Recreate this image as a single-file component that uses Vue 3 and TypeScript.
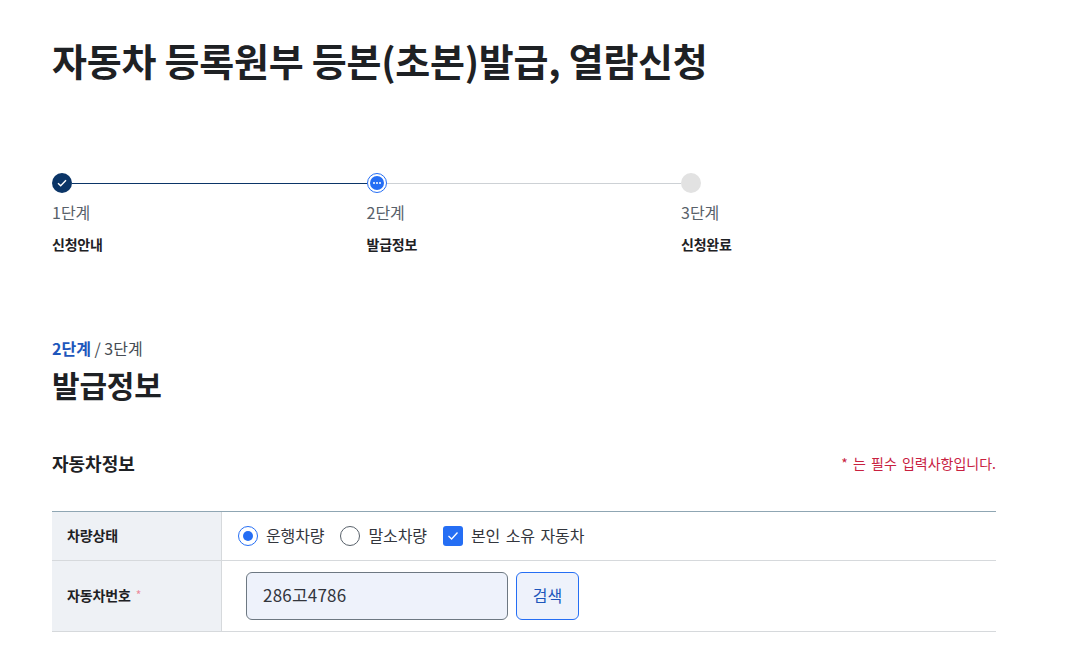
<script setup lang="ts">
interface Step { no: string; name: string; state: 'done' | 'current' | 'todo' }
const steps: Step[] = [
  { no: '1단계', name: '신청안내', state: 'done' },
  { no: '2단계', name: '발급정보', state: 'current' },
  { no: '3단계', name: '신청완료', state: 'todo' },
]
</script>

<template>
  <main class="page">
    <h1 class="title">자동차 등록원부 등본(초본)발급, 열람신청</h1>

    <ol class="steps">
      <li v-for="s in steps" :key="s.no" class="step" :class="s.state">
        <div class="track">
          <span class="dot">
            <svg v-if="s.state === 'done'" width="10" height="8" viewBox="0 0 10 8" fill="none">
              <path d="M1 4.2 3.7 6.8 9 1.2" stroke="#fff" stroke-width="1.4" />
            </svg>
            <span v-else-if="s.state === 'current'" class="inner">
              <i></i><i></i><i></i>
            </span>
          </span>
          <span v-if="s.state !== 'todo'" class="line"></span>
        </div>
        <div class="no">{{ s.no }}</div>
        <div class="name">{{ s.name }}</div>
      </li>
    </ol>

    <div class="count"><b>2단계</b> / 3단계</div>
    <h2 class="sub">발급정보</h2>

    <div class="sec-head">
      <h3 class="sec">자동차정보</h3>
      <p class="req">* 는 필수 입력사항입니다.</p>
    </div>

    <div class="table">
      <div class="row r1">
        <div class="th">차량상태</div>
        <div class="td opts">
          <label class="opt"><span class="radio on"></span><span class="lbl">운행차량</span></label>
          <label class="opt"><span class="radio"></span><span class="lbl">말소차량</span></label>
          <label class="opt"><span class="check">
            <svg width="12" height="10" viewBox="0 0 12 10" fill="none">
              <path d="M1.5 5 4.6 8 10.5 1.5" stroke="#fff" stroke-width="1.3" />
            </svg>
          </span><span class="lbl">본인 소유 자동차</span></label>
        </div>
      </div>
      <div class="row r2">
        <div class="th">자동차번호<span class="star">*</span></div>
        <div class="td field">
          <input class="input" value="286고4786" />
          <button class="btn" type="button">검색</button>
        </div>
      </div>
    </div>
  </main>
</template>

<style>
html, body { margin: 0; background: #fff; }
</style>

<style scoped>
.page {
  width: 944px;
  padding: 36px 0 0 52px;
  font-family: "Noto Sans CJK KR", "Noto Sans", sans-serif;
  color: #1e2124;
  height: 624px;
  overflow: hidden;
}
.title { margin: 0; font-size: 38px; line-height: 48px; font-weight: 700; letter-spacing: -0.25px; }
.steps { list-style: none; margin: 0; padding: 0; display: flex; margin-top: 89px; }
.step { width: 314.5px; }
.track { display: flex; align-items: center; height: 20px; }
.dot { width: 20px; height: 20px; border-radius: 50%; flex: none; display: flex; align-items: center; justify-content: center; box-sizing: border-box; }
.done .dot { background: #0b3567; }
.current .dot { background: #fff; border: 1px solid #256ef4; }
.todo .dot { background: #e2e2e2; }
.inner { width: 14px; height: 14px; border-radius: 50%; background: #256ef4; display: flex; align-items: center; justify-content: center; gap: 1px; }
.inner i { width: 2px; height: 2px; border-radius: 50%; background: #fff; }
.line { flex: 1; height: 1px; background: #cdd1d5; }
.done .line { background: #0b3567; }
.no { margin-top: 7px; font-size: 16px; line-height: 24px; color: #58616a; }
.name { margin-top: 10px; font-size: 14px; line-height: 20px; font-weight: 700; color: #1e2124; letter-spacing: -0.2px; }
.count { margin-top: 82px; font-size: 16px; line-height: 24px; color: #464c53; }
.count b { color: #1d56bc; font-weight: 700; }
.sub { margin: 5px 0 0; font-size: 30px; line-height: 38px; font-weight: 700; letter-spacing: -0.2px; }
.sec-head { display: flex; justify-content: space-between; align-items: center; margin-top: 47px; }
.sec { margin: 0; font-size: 18px; line-height: 26px; font-weight: 700; }
.req { margin: 0; font-size: 14px; line-height: 20px; color: #c8213f; word-spacing: 2px; }
.table { margin-top: 35px; border-top: 1px solid #8fa6b3; }
.row { display: flex; border-bottom: 1px solid #d6d9dc; }
.r1 { height: 48px; }
.r2 { height: 70px; }
.th { width: 170px; flex: none; box-sizing: border-box; padding: 0 0 3px 15px; background: #eef1f5; border-right: 1px solid #d6d9dc; display: flex; align-items: center; font-size: 14px; font-weight: 700; letter-spacing: -0.15px; }
.star { color: #ec8a9b; margin-left: 5px; font-size: 12px; font-weight: 400; }
.td { flex: 1; display: flex; align-items: center; }
.opts { padding-left: 16px; gap: 16px; font-size: 16px; color: #33363d; }
.opt { display: flex; align-items: center; gap: 8px; letter-spacing: -0.1px; word-spacing: 2px; }
.lbl { padding-bottom: 3px; }
.radio { width: 20px; height: 20px; border-radius: 50%; border: 1px solid #58616a; box-sizing: border-box; background: #fff; position: relative; }
.radio.on { border-color: #256ef4; }
.radio.on::after { content: ""; position: absolute; inset: 4px; border-radius: 50%; background: #256ef4; }
.check { width: 20px; height: 20px; border-radius: 3px; background: #256ef4; display: flex; align-items: center; justify-content: center; }
.field { padding-left: 24px; gap: 8px; }
.input { box-sizing: border-box; width: 262px; height: 48px; padding: 0 16px 3px; border: 1px solid #6d7882; border-radius: 6px; background: #eef2fb; font: inherit; font-size: 17px; color: #33363d; letter-spacing: 0.2px; outline: none; }
.btn { box-sizing: border-box; width: 63px; height: 48px; padding: 0 0 2px; border: 1px solid #256ef4; border-radius: 6px; background: #eef2fb; font: inherit; font-size: 16px; color: #1d56bc; }
</style>
